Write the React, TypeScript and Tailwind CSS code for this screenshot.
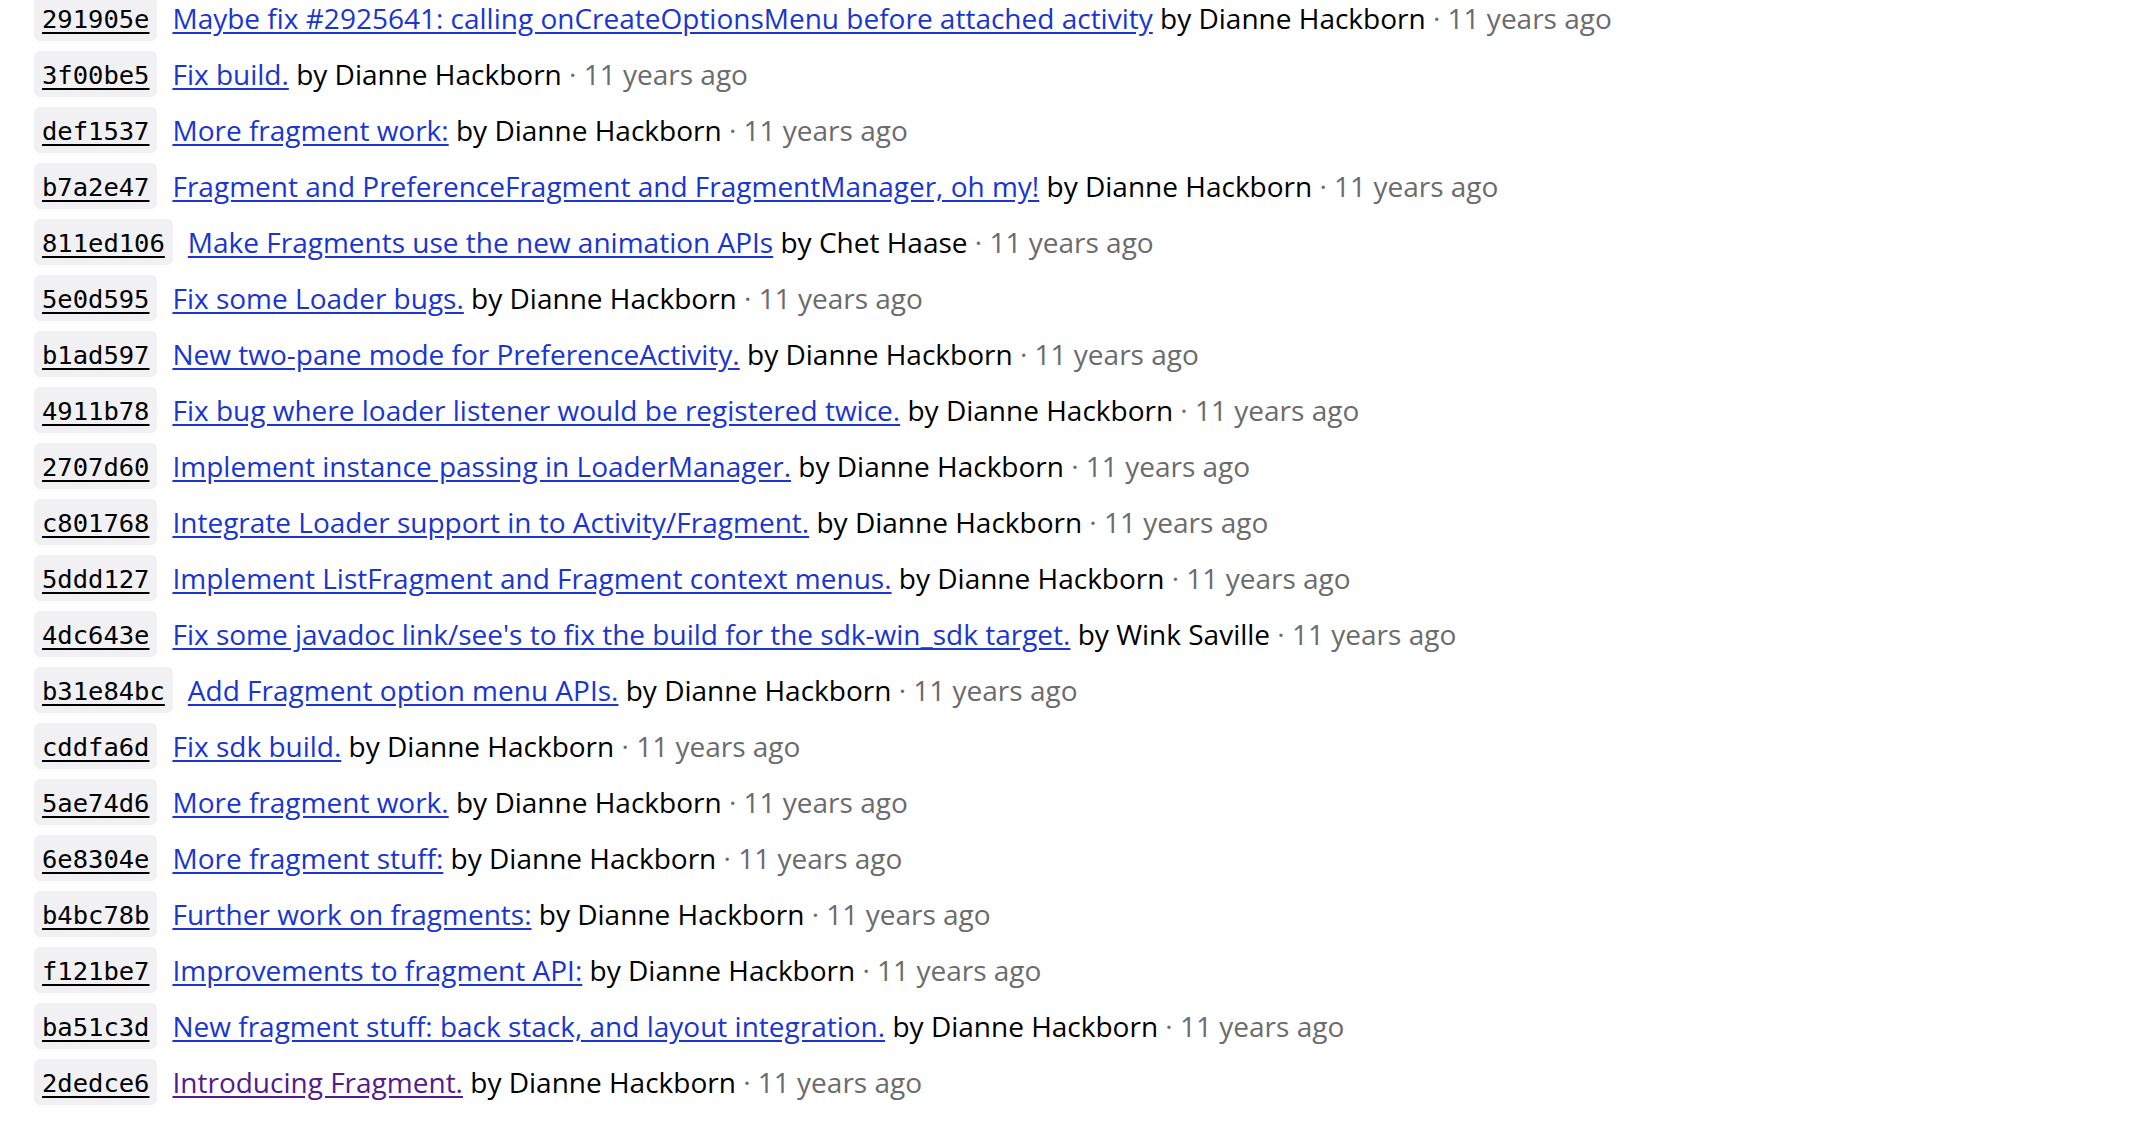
const commits = [
  { hash: "291905e", msg: "Maybe fix #2925641: calling onCreateOptionsMenu before attached activity", author: "Dianne Hackborn" },
  { hash: "3f00be5", msg: "Fix build.", author: "Dianne Hackborn" },
  { hash: "def1537", msg: "More fragment work:", author: "Dianne Hackborn" },
  { hash: "b7a2e47", msg: "Fragment and PreferenceFragment and FragmentManager, oh my!", author: "Dianne Hackborn" },
  { hash: "811ed106", msg: "Make Fragments use the new animation APIs", author: "Chet Haase" },
  { hash: "5e0d595", msg: "Fix some Loader bugs.", author: "Dianne Hackborn" },
  { hash: "b1ad597", msg: "New two-pane mode for PreferenceActivity.", author: "Dianne Hackborn" },
  { hash: "4911b78", msg: "Fix bug where loader listener would be registered twice.", author: "Dianne Hackborn" },
  { hash: "2707d60", msg: "Implement instance passing in LoaderManager.", author: "Dianne Hackborn" },
  { hash: "c801768", msg: "Integrate Loader support in to Activity/Fragment.", author: "Dianne Hackborn" },
  { hash: "5ddd127", msg: "Implement ListFragment and Fragment context menus.", author: "Dianne Hackborn" },
  { hash: "4dc643e", msg: "Fix some javadoc link/see's to fix the build for the sdk-win_sdk target.", author: "Wink Saville" },
  { hash: "b31e84bc", msg: "Add Fragment option menu APIs.", author: "Dianne Hackborn" },
  { hash: "cddfa6d", msg: "Fix sdk build.", author: "Dianne Hackborn" },
  { hash: "5ae74d6", msg: "More fragment work.", author: "Dianne Hackborn" },
  { hash: "6e8304e", msg: "More fragment stuff:", author: "Dianne Hackborn" },
  { hash: "b4bc78b", msg: "Further work on fragments:", author: "Dianne Hackborn" },
  { hash: "f121be7", msg: "Improvements to fragment API:", author: "Dianne Hackborn" },
  { hash: "ba51c3d", msg: "New fragment stuff: back stack, and layout integration.", author: "Dianne Hackborn" },
  { hash: "2dedce6", msg: "Introducing Fragment.", author: "Dianne Hackborn", visited: true },
];

export default function App() {
  return (
    <div className="w-[2134px] h-[1128px] overflow-hidden bg-white font-['Open_Sans',sans-serif] text-[28px] text-black">
      <ul className="mt-[-5px] pl-[34px] flex flex-col gap-[10px]">
        {commits.map((c) => (
          <li key={c.hash} className="flex items-center gap-[15px] h-[46px] whitespace-nowrap">
            <a
              href="#"
              className="shrink-0 rounded-md bg-[#f1f1f3] px-2 pt-[3px] h-[46px] flex items-center font-['DejaVu_Sans_Mono',monospace] text-[25.5px] text-black underline underline-offset-[4px]"
            >
              {c.hash}
            </a>
            <span>
              <a
                href="#"
                className={
                  c.visited
                    ? "text-[#551a8b] underline underline-offset-[3px]"
                    : "text-[#1a35d0] underline underline-offset-[3px]"
                }
              >
                {c.msg}
              </a>{" "}
              by {c.author}
              <span className="text-[#6b6b6b]"> · 11 years ago</span>
            </span>
          </li>
        ))}
      </ul>
    </div>
  );
}
